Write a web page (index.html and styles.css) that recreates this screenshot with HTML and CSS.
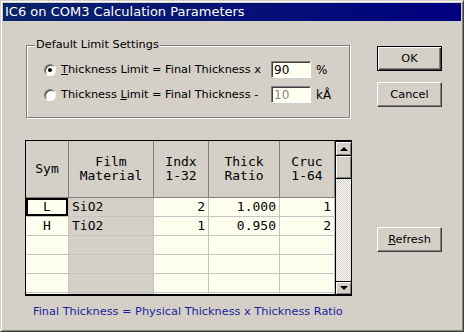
FILE: index.html
```html
<!DOCTYPE html>
<html lang="en">
<head>
    <meta charset="UTF-8">
    <title>IC6 on COM3 Calculation Parameters</title>
    <link rel="stylesheet" href="styles.css">
</head>
<body>
    <div class="window">
        <div class="titlebar">IC6 on COM3 Calculation Parameters</div>
        <div class="content">
            <div class="left">
                <div class="group">
                    <div class="group-title">Default Limit Settings</div>
                    <div class="opt-row">
                        <label class="opt"><span class="radio checked"></span><span><u>T</u>hickness Limit = Final Thickness x</span></label>
                        <input class="field" value="90">
                        <span class="unit">%</span>
                    </div>
                    <div class="opt-row">
                        <label class="opt"><span class="radio"></span><span>Thickness <u>L</u>imit = Final Thickness -</span></label>
                        <input class="field field-off" value="10" disabled>
                        <span class="unit">kÅ</span>
                    </div>
                </div>

                <div class="grid">
                    <div class="cells">
                        <div class="row head">
                            <div class="cell">Sym</div>
                            <div class="cell">Film<br>Material</div>
                            <div class="cell">Indx<br>1-32</div>
                            <div class="cell">Thick<br>Ratio</div>
                            <div class="cell">Cruc<br>1-64</div>
                        </div>
                        <div class="row">
                            <div class="cell sym focus">L</div>
                            <div class="cell mat">SiO2</div>
                            <div class="cell num">2</div>
                            <div class="cell num">1.000</div>
                            <div class="cell num">1</div>
                        </div>
                        <div class="row">
                            <div class="cell sym">H</div>
                            <div class="cell mat">TiO2</div>
                            <div class="cell num">1</div>
                            <div class="cell num">0.950</div>
                            <div class="cell num">2</div>
                        </div>
                        <div class="row">
                            <div class="cell sym"></div><div class="cell mat"></div><div class="cell num"></div><div class="cell num"></div><div class="cell num"></div>
                        </div>
                        <div class="row">
                            <div class="cell sym"></div><div class="cell mat"></div><div class="cell num"></div><div class="cell num"></div><div class="cell num"></div>
                        </div>
                        <div class="row">
                            <div class="cell sym"></div><div class="cell mat"></div><div class="cell num"></div><div class="cell num"></div><div class="cell num"></div>
                        </div>
                        <div class="row">
                            <div class="cell sym"></div><div class="cell mat"></div><div class="cell num"></div><div class="cell num"></div><div class="cell num"></div>
                        </div>
                    </div>
                    <div class="scrollbar">
                        <div class="sb-btn up"><span class="arrow-up"></span></div>
                        <div class="sb-thumb"></div>
                        <div class="sb-track"></div>
                        <div class="sb-btn down"><span class="arrow-down"></span></div>
                    </div>
                </div>

                <p class="formula">Final Thickness = Physical Thickness x Thickness Ratio</p>
            </div>

            <div class="buttons">
                <button class="btn btn-default">OK</button>
                <button class="btn btn-cancel">Cancel</button>
                <button class="btn btn-refresh"><u>R</u>efresh</button>
            </div>
        </div>
    </div>
</body>
</html>
```

FILE: styles.css
```css
body {
    margin: 0;
    background: #d4d0c8;
    font-family: "DejaVu Sans", sans-serif;
    font-size: 11.3px;
    color: #000;
}
.window {
    width: 464px;
    height: 332px;
    box-sizing: border-box;
    padding: 2px;
    background: #d4d0c8;
    border: 1px solid;
    border-color: #d4d0c8 #404040 #404040 #d4d0c8;
    box-shadow: inset 1px 1px 0 #fff, inset -1px -1px 0 #808080;
}
.titlebar {
    height: 18px;
    line-height: 18px;
    padding-left: 2px;
    color: #fff;
    font-size: 13px;
    background: linear-gradient(to right, #0a246a, #000080);
}
.content {
    display: flex;
    padding-left: 22px;
}
.left { width: 327px; }

/* group box */
.group {
    width: 324px;
    box-sizing: border-box;
    margin: 24px 0 0 1px;
    padding: 0 0 14px 17px;
    border: 1px solid #808080;
    box-shadow: 1px 1px 0 #fff, inset 1px 1px 0 #fff;
}
.group-title {
    width: max-content;
    margin: -8px 0 0 -9px;
    padding: 0 1px;
    line-height: 14px;
    background: #d4d0c8;
}
.opt-row {
    display: flex;
    align-items: center;
    height: 17px;
    margin-top: 9px;
}
.opt-row + .opt-row { margin-top: 8px; }
.opt {
    display: flex;
    align-items: center;
    gap: 5px;
    width: 227px;
}
.radio {
    width: 12px;
    height: 12px;
    box-sizing: border-box;
    border-radius: 50%;
    background: #fff;
    border: 1px solid;
    border-color: #808080 #fff #fff #808080;
    box-shadow: inset 1px 1px 0 #404040;
    display: flex;
    align-items: center;
    justify-content: center;
}
.radio.checked::after {
    content: "";
    width: 4px;
    height: 4px;
    border-radius: 50%;
    background: #000;
}
.field {
    width: 40px;
    height: 17px;
    box-sizing: border-box;
    padding: 0 2px;
    margin: 0;
    font-family: "DejaVu Sans", sans-serif;
    font-size: 12px;
    color: #000;
    background: #ffffef;
    border: 1px solid;
    border-color: #808080 #fff #fff #808080;
    box-shadow: inset 1px 1px 0 #404040;
    outline: none;
}
.field.field-off { color: #8a8a8a; background: #ffffef; }
.unit { margin-left: 5px; font-size: 12px; }

/* data grid */
.grid {
    display: flex;
    margin-top: 22px;
    height: 156px;
    box-sizing: border-box;
    border: 1px solid #000;
    border-bottom-width: 2px;
    font-family: "DejaVu Sans Mono", monospace;
    font-size: 13px;
}
.cells {
    width: 309px;
    overflow: hidden;
}
.row {
    display: grid;
    grid-template-columns: 43px 85px 55px 71px 55px;
    height: 19px;
}
.cell {
    box-sizing: border-box;
    border-right: 1px solid #c4c4c4;
    border-bottom: 1px solid #c4c4c4;
    background: #fffff0;
    line-height: 18px;
    padding: 0 3px;
    white-space: nowrap;
}
.row.head { height: 57px; }
.head .cell {
    background: #d4d0c8;
    border-color: #808080;
    line-height: 14px;
    display: flex;
    align-items: center;
    justify-content: center;
    text-align: center;
}
.sym { text-align: center; }
.mat { background: #d4d0c8; }
.num { text-align: right; }
.focus { box-shadow: inset 0 0 0 2px #000; }

.scrollbar {
    width: 16px;
    display: flex;
    flex-direction: column;
}
.sb-btn, .sb-thumb {
    box-sizing: border-box;
    background: #d4d0c8;
    border: 1px solid #000;
    border-right: 0;
    box-shadow: inset 1px 1px 0 #fff, inset -1px -1px 0 #808080;
}
.sb-btn {
    height: 15px;
    display: flex;
    align-items: center;
    justify-content: center;
}
.sb-btn.down { height: 13px; border-bottom: 0; }
.sb-thumb { height: 23px; border-top: 0; }
.sb-track {
    flex: 1;
    border-left: 1px solid #000;
    background: repeating-conic-gradient(#d4d0c8 0 25%, #fff 0 50%) 0 0 / 2px 2px;
}
.arrow-up, .arrow-down {
    width: 0;
    height: 0;
    border-left: 4px solid transparent;
    border-right: 4px solid transparent;
}
.arrow-up { border-bottom: 4px solid #000; }
.arrow-down { border-top: 4px solid #000; }

.formula {
    margin: 9px 0 0 8px;
    line-height: 14px;
    color: #1c1c9c;
}

/* buttons */
.buttons {
    display: flex;
    flex-direction: column;
    width: 65px;
    margin-left: 25px;
}
.btn {
    height: 25px;
    margin: 0;
    padding: 0;
    font-family: "DejaVu Sans", sans-serif;
    font-size: 11.3px;
    color: #000;
    background: #d4d0c8;
    border: 1px solid;
    border-color: #fff #404040 #404040 #fff;
    box-shadow: inset -1px -1px 0 #808080;
}
.btn-default {
    margin-top: 25px;
    border-color: #000;
    box-shadow: inset 1px 1px 0 #fff, inset -1px -1px 0 #404040, inset -2px -2px 0 #808080;
}
.btn-cancel { margin-top: 11px; }
.btn-refresh { margin-top: 120px; }
```
